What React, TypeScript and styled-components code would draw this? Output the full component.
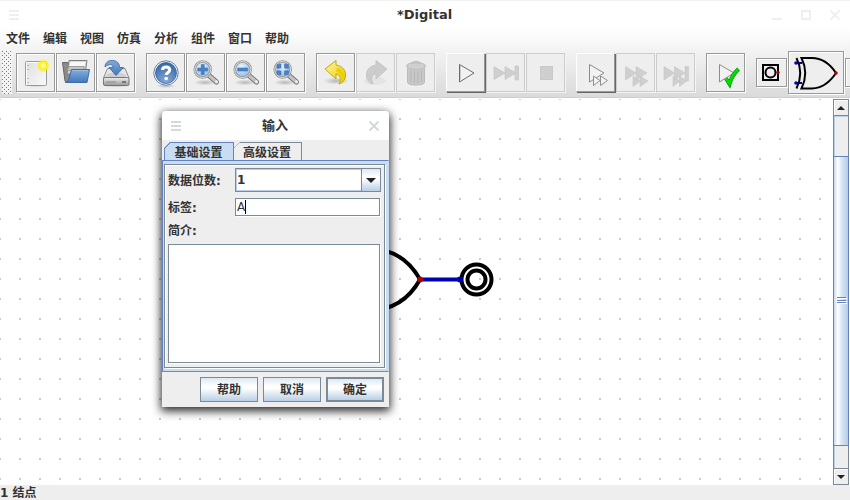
import React from 'react';
import styled, { createGlobalStyle, css } from 'styled-components';

const ink = '#333333';
const steel = '#7a8a99';
const blue = '#6382bf';
const panel = '#eeeeee';
const metal = 'linear-gradient(#dde8f3 0%, #ffffff 35%, #ffffff 45%, #b8cfe5 100%)';

const GlobalStyle = createGlobalStyle`
  * { box-sizing: border-box; }
  body { margin: 0; background: #ffffff; }
  body, button, input, select, textarea {
    font-family: "DejaVu Sans", "Noto Sans CJK SC", sans-serif;
    font-size: 12px;
    font-weight: 700;
    line-height: 16px;
    color: ${ink};
  }
`;

const Window = styled.div`
  position: relative;
  display: flex;
  flex-direction: column;
  height: 100vh;
  overflow: hidden;
`;

const TitleBar = styled.header`
  display: grid;
  grid-template-columns: 1fr auto 1fr;
  align-items: center;
  flex: none;
  height: 28px;
  padding: 0 10px 0 9px;
  border-top: 1px solid #f2f2f2;
  background: #ffffff;
`;

const WindowTitle = styled.h1`
  margin: 0;
  font-size: 13px;
  font-weight: 700;
  line-height: 20px;
`;

const WindowControls = styled.div`
  display: flex;
  justify-content: flex-end;
  gap: 19px;
`;

const GlyphButton = styled.button<{ $tone: string }>`
  display: block;
  width: 10px;
  height: 10px;
  padding: 0;
  border: 0;
  background: none;
  color: ${p => p.$tone};
  svg { display: block; overflow: visible; }
`;

const Chrome = styled.div`
  flex: none;
  background: linear-gradient(#ffffff 0%, #f3f3f3 32%, #dadada 100%);
  border-bottom: 1px solid #cccccc;
`;

const MenuBar = styled.nav`
  display: flex;
  gap: 13px;
  height: 21px;
  padding: 2px 6px;
`;

const MenuButton = styled.button`
  padding: 0;
  border: 0;
  background: none;
  white-space: nowrap;
`;

const ToolBar = styled.div`
  display: flex;
  align-items: center;
  gap: 11px;
  height: 48px;
  padding: 0 0 1px 2px;
  overflow: hidden;
`;

const Grip = styled.div`
  flex: none;
  width: 10px;
  height: 43px;
  margin-right: -7px;
  background-color: #f4f4f4;
  background-image: conic-gradient(from 270deg at 1px 1px, #777777 90deg, transparent 0),
    conic-gradient(from 270deg at 1px 1px, #777777 90deg, transparent 0);
  background-position: 0 0, 2px 2px;
  background-size: 4px 4px;
`;

const ToolGroup = styled.div`
  display: flex;
  align-items: center;
  gap: 1px;
  flex: none;
`;

const ToolButton = styled.button<{ $raised?: boolean; $w?: number; $h?: number }>`
  display: block;
  flex: none;
  width: ${p => p.$w ?? 39}px;
  height: ${p => p.$h ?? 39}px;
  padding: 0;
  border: 1px solid #999999;
  background: ${panel};
  box-shadow: inset 1px 1px #ffffff, 1px 1px #ffffff;
  svg { display: block; }
  &:disabled { border-color: #cccccc; box-shadow: 1px 1px #f4f4f4; }
  ${p => p.$raised && css`
    border-color: #ffffff #999999 #999999 #ffffff;
    box-shadow: 1px 1px #666666;
  `}
`;

const Workspace = styled.main`
  display: flex;
  flex: 1;
  min-height: 0;
  margin-top: 1px;
`;

const Canvas = styled.svg`
  display: block;
  flex: 1;
  min-width: 0;
  height: 100%;
`;

const ScrollBar = styled.div`
  display: flex;
  flex-direction: column;
  flex: none;
  width: 16px;
  margin-right: 1px;
  border: 1px solid ${steel};
  background: ${panel};
`;

const ScrollButton = styled.button`
  display: grid;
  place-items: center;
  flex: none;
  height: 15px;
  padding: 0;
  border: 0;
  background: ${panel};
  box-shadow: inset 1px 1px #ffffff;
`;

const ScrollTrack = styled.div`
  display: grid;
  grid-template-rows: 40fr 291fr 22fr;
  flex: 1;
  border: solid ${steel};
  border-width: 1px 0;
  box-shadow: inset 1px 1px #b8cfe5;
`;

const ScrollThumb = styled.div`
  display: grid;
  place-items: center;
  grid-row: 2;
  margin: 0 -1px;
  padding-left: 2px;
  border: 1px solid ${blue};
  background: linear-gradient(90deg, #c3d8ee 0%, #ffffff 25%, #f4f9ff 36%, #dce9f6 50%, #b4cce4 100%);
`;

const StatusBar = styled.footer`
  flex: none;
  height: 15px;
  line-height: 17px;
  background: ${panel};
`;

const Dialog = styled.section`
  position: absolute;
  left: 162px;
  top: 111px;
  width: 227px;
  border-radius: 4px 4px 0 0;
  background: ${panel};
  box-shadow: 0 3px 10px 1px rgba(0, 0, 0, 0.85);
`;

const DialogTitle = styled.div`
  display: grid;
  grid-template-columns: 1fr auto 1fr;
  align-items: center;
  justify-items: start;
  height: 29px;
  padding: 0 10px 0 9px;
  border-radius: 4px 4px 0 0;
  background: #ffffff;
  & > :last-child { justify-self: end; }
`;

const Tabs = styled.div`
  display: flex;
  height: 20px;
  padding: 2px 2px 0;
`;

const Tab = styled.button<{ $active?: boolean }>`
  width: ${p => (p.$active ? 70 : 68)}px;
  height: 18px;
  padding: 2px 1px 0 0;
  border: solid ${p => (p.$active ? blue : steel)};
  border-width: 1px 1px 0 ${p => (p.$active ? 1 : 0)}px;
  clip-path: polygon(6px 0, 100% 0, 100% 100%, 0 100%, 0 6px);
  background: linear-gradient(135deg, ${p => (p.$active ? blue : steel)} 4px, ${p => (p.$active ? '#c8ddf2' : panel)} 4px);
  line-height: 16px;
`;

const TabPanel = styled.div`
  padding: 3px;
  padding-left: 1px;
  border: 1px solid ${blue};
  border-right-color: #c8ddf2;
  border-bottom-color: ${steel};
  background: #c8ddf2;
`;

const Form = styled.form`
  display: grid;
  grid-template-columns: 67px minmax(0, 1fr);
  align-items: center;
  row-gap: 5px;
  padding: 3px 3px 4px 3px;
  border: 1px solid ${steel};
  background: ${panel};
  box-shadow: inset 1px 1px #ffffff, 1px 1px #ffffff;
`;

const Label = styled.label`
  padding-top: 1px;
  white-space: nowrap;
`;

const ComboBox = styled.div`
  position: relative;
  display: flex;
  height: 24px;
  border: 1px solid ${steel};
  background: #ffffff;
  box-shadow: inset 0 0 0 1px #b8cfe5;
`;

const Select = styled.select`
  flex: 1;
  padding: 0 1px;
  border: 0;
  outline: 0;
  appearance: none;
  background: transparent;
`;

const ComboArrow = styled.span`
  position: absolute;
  right: 0;
  top: 0;
  bottom: 0;
  display: grid;
  place-items: center;
  width: 19px;
  border-left: 1px solid ${steel};
  background: ${metal};
  pointer-events: none;
`;

const FieldBox = styled.div`
  position: relative;
  display: flex;
  margin: 1px 1px 1px 0;
`;

const TextInput = styled.input`
  flex: 1;
  min-width: 0;
  height: 18px;
  padding: 0 1px;
  border: 1px solid ${steel};
  outline: 0;
  background: #ffffff;
  box-shadow: 1px 1px #ffffff;
  font-weight: 400;
  caret-color: transparent;
`;

const Caret = styled.span`
  position: absolute;
  left: 10px;
  top: 2px;
  bottom: 2px;
  width: 1px;
  background: #000000;
`;

const TextArea = styled.textarea`
  grid-column: 1 / -1;
  display: block;
  height: 119px;
  margin-right: 1px;
  padding: 1px;
  border: 1px solid ${steel};
  outline: 0;
  resize: none;
  background: #ffffff;
  box-shadow: 1px 1px #ffffff;
  font-weight: 400;
`;

const DialogActions = styled.div`
  display: flex;
  justify-content: flex-end;
  gap: 5px;
  padding: 5px;
`;

const PushButton = styled.button<{ $primary?: boolean }>`
  width: 58px;
  height: 25px;
  padding: 1px 0 0;
  border: ${p => (p.$primary ? 2 : 1)}px solid ${steel};
  background: ${metal};
`;

const Hamburger = () => (
  <svg width="10" height="10"><path d="M0 1h10M0 5h10M0 9h10" stroke="currentColor" strokeWidth="2" /></svg>
);
const Cross = () => (
  <svg width="10" height="10"><path d="M.5 .5l9 9M9.5 .5l-9 9" stroke="currentColor" strokeWidth="2" /></svg>
);

const Icon = ({ children, w = 37, h = 37 }: { children: React.ReactNode; w?: number; h?: number }) => (
  <svg width={w} height={h} viewBox={`0 0 ${w} ${h}`} fill="none" aria-hidden="true">{children}</svg>
);

const HiddenSvg = styled.svg`
  position: absolute;
`;

const Gradients = () => (
  <HiddenSvg width="0" height="0" aria-hidden="true">
    <defs>
      <linearGradient id="paper" x1="0" y1="0" x2="1" y2="1"><stop stopColor="#dedede" /><stop offset="1" stopColor="#fafafa" /></linearGradient>
      <linearGradient id="azure" x1="0" y1="0" x2="0" y2="1"><stop stopColor="#82addc" /><stop offset="1" stopColor="#4179b8" /></linearGradient>
      <linearGradient id="grey" x1="0" y1="0" x2="0" y2="1"><stop stopColor="#f0f0f0" /><stop offset="1" stopColor="#969696" /></linearGradient>
      <linearGradient id="gold" x1="0" y1="0" x2="1" y2="1"><stop stopColor="#fff6a0" /><stop offset="1" stopColor="#e9c900" /></linearGradient>
      <radialGradient id="sun"><stop stopColor="#fffff0" /><stop offset=".35" stopColor="#fff64a" /><stop offset=".7" stopColor="#fff200" stopOpacity=".85" /><stop offset="1" stopColor="#fff200" stopOpacity="0" /></radialGradient>
      <radialGradient id="shade"><stop stopColor="#888" stopOpacity=".55" /><stop offset="1" stopColor="#888" stopOpacity="0" /></radialGradient>
      <radialGradient id="lens" cx=".4" cy=".3" r=".8"><stop stopColor="#e8f2fd" /><stop offset="1" stopColor="#8ab4e4" /></radialGradient>
      <radialGradient id="orb" cx=".5" cy=".9" r=".9"><stop stopColor="#86aad6" /><stop offset="1" stopColor="#3465a4" /></radialGradient>
    </defs>
  </HiddenSvg>
);

const NewIcon = () => (
  <Icon>
    <ellipse cx="19" cy="31.5" rx="12" ry="1.5" fill="url(#shade)" />
    <rect x="8.5" y="7.5" width="21" height="24" rx="1" fill="url(#paper)" stroke="#9a9a9a" />
    <path d="M9.5 31V8.500H28.500" stroke="#fff" />
    <path d="M11 11v1M11 15v1M11 24v1M11 28v1" stroke="#888" />
    <circle cx="26.300" cy="11.700" r="6.500" fill="url(#sun)" />
  </Icon>
);

const OpenIcon = () => (
  <Icon>
    <path d="M5.500 8.500h5l1 2h2v18H9L8 27z" fill="#8c8c8c" stroke="#666" />
    <path d="M12 6.500h18L28 20H10z" fill="#d8d8d8" stroke="#808080" />
    <path d="M13.500 8h15l-1 4h-15z" fill="#f8f8f8" />
    <path d="M10 16.500 12 12.500h15v4z" fill="#c4c4c4" stroke="#8c8c8c" strokeWidth=".7" />
    <path d="M14.500 15.500H32.500L30 28.500H8.500q3-1 3.500-4z" fill="url(#azure)" stroke="#3c6da8" />
    <path d="M15.500 16.500H31" stroke="#9bc0e8" />
  </Icon>
);

const SaveIcon = () => (
  <Icon>
    <ellipse cx="19" cy="31.500" rx="14" ry="2" fill="url(#shade)" />
    <path d="M10.500 14.500H28L32 24H6.500z" fill="#e6e6e6" stroke="#8b8b8b" />
    <ellipse cx="19" cy="22" rx="10" ry="3.500" fill="#cfcfcf" />
    <rect x="6.500" y="23.500" width="25.500" height="8" rx="1.500" fill="url(#grey)" stroke="#777" />
    <path d="M10 27v2M12 27v2M14 27v2M16 27v2M18 27v2" stroke="#888" />
    <path d="M25 28h4" stroke="#777" strokeWidth="2" />
    <path d="M8 13C8 7.500 13 6 16.500 6.500 21 7.500 22.500 10 22.500 13.500H26.500L19 21.500 12 13.500H16C16 10 12 9.500 8 13z" fill="url(#azure)" stroke="#36659d" strokeWidth=".8" />
  </Icon>
);

const HelpIcon = () => (
  <Icon>
    <ellipse cx="19" cy="32" rx="10" ry="2" fill="url(#shade)" />
    <circle cx="19" cy="19" r="12.200" fill="#fff" stroke="#6180a6" />
    <circle cx="19" cy="19" r="10.500" fill="url(#orb)" stroke="#32609c" strokeWidth=".8" />
    <path d="M15.500 16C15.500 13.500 17 13 19 13c2.200 0 3.700 1 3.700 3 0 2.400-3.500 2.500-3.500 5" stroke="#fff" strokeWidth="3" />
    <circle cx="19.200" cy="24.500" r="1.800" fill="#fff" />
  </Icon>
);

const Magnifier = ({ sign }: { sign: string }) => (
  <Icon>
    <ellipse cx="18" cy="28.500" rx="11" ry="3" fill="url(#shade)" />
    <path d="M22 21.500 29.500 28" stroke="#777" strokeWidth="5" strokeLinecap="round" />
    <path d="M22 21.500 29.500 28" stroke="#c4c4c4" strokeWidth="3" strokeLinecap="round" />
    <circle cx="29.500" cy="27.800" r="1.500" fill="#eee" />
    <circle cx="15.700" cy="15.500" r="8" fill="url(#lens)" stroke="#909090" strokeWidth="2.500" />
    <circle cx="15.700" cy="15.500" r="8" stroke="#e0e0e0" />
    <path d={sign} fill="#4c82c4" stroke="#3f74b5" strokeWidth=".6" />
  </Icon>
);

const undoPath = 'M8 15 19 6.500V11C26 12 29 17 28.500 22c-.3 4-3 7-6.500 8 2-4 2-9.500-3-10V25z';
const UndoIcon = () => (
  <Icon>
    <ellipse cx="19" cy="27" rx="13" ry="3.500" fill="url(#shade)" />
    <path d={undoPath} fill="url(#gold)" stroke="#c8a600" strokeLinejoin="round" />
    <path d="M19.500 15.500C24 16.500 26 20 25 25" stroke="#edd000" strokeWidth="4" />
  </Icon>
);
const RedoIcon = () => (
  <Icon>
    <g transform="matrix(-1 0 0 1 38 0)">
      <ellipse cx="20" cy="27" rx="11" ry="4" fill="#e4e4e4" />
      <path d={undoPath} fill="#cccccc" stroke="#c6c6c6" strokeLinejoin="round" />
    </g>
  </Icon>
);
const TrashIcon = () => (
  <Icon>
    <path d="M10.500 13V28q0 3 8.500 3t8.500-3V13z" fill="#c8c8c8" stroke="#bababa" />
    <path d="M14 16v12M17.500 17v12M21 17v12M24.500 16v12" stroke="#b5b5b5" />
    <ellipse cx="19" cy="12" rx="9.500" ry="3.500" fill="#cfcfcf" stroke="#bdbdbd" />
    <path d="M15 10V8.500q4-2.500 8 0V10" fill="#c6c6c6" stroke="#bababa" />
  </Icon>
);

const Triangle = () => <path d="M12.500 10.500V28L27 19z" fill="#f2f2f2" stroke="#8c8c8c" strokeLinejoin="round" />;
const PlayIcon = () => (
  <Icon><path d="M12.500 10.500V28L27 19z" fill="#f2f2f2" stroke="#6c6c6c" strokeLinejoin="round" /><path d="M13.500 12V26" stroke="#ccc" /></Icon>
);
const StepIcon = () => (
  <Icon><path d="M7 12.500v13L18 19zM18 12.500v13L29 19zM28 12h3.500v14H28z" fill="#cfcfcf" stroke="#c4c4c4" strokeWidth=".7" /></Icon>
);
const StopIcon = () => <Icon><rect x="13.500" y="12.500" width="12" height="13" fill="#cfcfcf" stroke="#c9c9c9" /></Icon>;
const RunBreakIcon = () => (
  <Icon><Triangle /><path d="M16.500 22v9.500l6.500-5zM23.500 22v9.500l7-5z" fill="#f2f2f2" stroke="#909090" strokeLinejoin="round" /></Icon>
);
const FastIcon = () => (
  <Icon><path d="M8.500 12.500v13.500L19 19zM19 12.500v13.500L30 19zM16 22v10.500l7.500-5.500zM23 22v10.500L31 27z" fill="#cfcfcf" stroke="#c6c6c6" strokeWidth=".6" /></Icon>
);
const FastEndIcon = () => (
  <Icon><path d="M7 12.500v13.500L17.500 19zM17.500 12.500v13.500L28 19zM28 12.500h3.500V27H28zM16 22v10.500l7-5.500zM22.500 22v10.500l7-5.500z" fill="#cfcfcf" stroke="#c6c6c6" strokeWidth=".6" /></Icon>
);
const CheckIcon = () => (
  <Icon><Triangle /><path d="M19 24.500 22.500 30Q25 21 31.500 15" stroke="#008c00" strokeWidth="4" /><path d="M19 24.500 22.500 29.500Q25 21 31.500 15" stroke="#00e000" strokeWidth="2.800" /></Icon>
);
const PinIcon = () => (
  <Icon w={28} h={27}>
    <rect x="6" y="6" width="15" height="15" stroke="#000" strokeWidth="2" />
    <circle cx="13.500" cy="13.500" r="5" stroke="#000" strokeWidth="2" />
    <circle cx="21" cy="13.500" r="1.700" fill="#b00000" />
  </Icon>
);
const XorIcon = () => (
  <Icon w={54} h={41}>
    <path d="M6 11h7M6 31h7" stroke="#0000b8" strokeWidth="2" />
    <circle cx="7" cy="11" r="1.800" fill="#0000d8" /><circle cx="7" cy="31" r="1.800" fill="#0000d8" />
    <path d="M7.500 6Q15 21 7.500 36.500M12.500 6Q20 21 12.500 36.500H23Q37 36 47 21 37 6 23 6z" stroke="#000" strokeWidth="2" />
    <circle cx="47" cy="21" r="1.800" fill="#c00000" />
  </Icon>
);

const menus = ['文件', '编辑', '视图', '仿真', '分析', '组件', '窗口', '帮助'];

type Tool = { name: string; icon: React.ReactNode; disabled?: boolean; raised?: boolean };
const toolGroups: Tool[][] = [
  [
    { name: '新建', icon: <NewIcon /> },
    { name: '打开', icon: <OpenIcon /> },
    { name: '保存', icon: <SaveIcon /> },
  ],
  [
    { name: '帮助', icon: <HelpIcon /> },
    { name: '放大', icon: <Magnifier sign="M14.200 10.500h3v3.500h3.500v3h-3.500v3.500h-3v-3.500h-3.500v-3h3.500z" /> },
    { name: '缩小', icon: <Magnifier sign="M10.700 14h10v3h-10z" /> },
    { name: '适应窗口', icon: <Magnifier sign="M10 10.500l4-.5v4l-4 .5zM21.500 10.500v4l-4-.5v-4zM10 16.500l4 .5v4l-4-.5zM21.500 16.500v4l-4 .5v-4z" /> },
  ],
  [
    { name: '撤销', icon: <UndoIcon /> },
    { name: '重做', icon: <RedoIcon />, disabled: true },
    { name: '删除', icon: <TrashIcon />, disabled: true },
  ],
  [
    { name: '启动仿真', icon: <PlayIcon />, raised: true },
    { name: '单步', icon: <StepIcon />, disabled: true },
    { name: '停止', icon: <StopIcon />, disabled: true },
  ],
  [
    { name: '运行至断点', icon: <RunBreakIcon />, raised: true },
    { name: '快速运行', icon: <FastIcon />, disabled: true },
    { name: '运行到底', icon: <FastEndIcon />, disabled: true },
  ],
  [{ name: '运行测试', icon: <CheckIcon /> }],
];

export default function App() {
  return (
    <Window>
      <GlobalStyle />
      <Gradients />
      <TitleBar>
        <GlyphButton $tone="#edf0f0" aria-label="窗口菜单"><Hamburger /></GlyphButton>
        <WindowTitle>*Digital</WindowTitle>
        <WindowControls>
          <GlyphButton $tone="#edf0f0" aria-label="最小化"><svg width="10" height="10"><path d="M0 9h10" stroke="currentColor" strokeWidth="2" /></svg></GlyphButton>
          <GlyphButton $tone="#edf0f0" aria-label="最大化"><svg width="10" height="10"><path d="M1 1h8v8H1z" fill="none" stroke="currentColor" strokeWidth="2" /></svg></GlyphButton>
          <GlyphButton $tone="#edf0f0" aria-label="关闭"><Cross /></GlyphButton>
        </WindowControls>
      </TitleBar>

      <Chrome>
        <MenuBar>{menus.map(m => <MenuButton key={m}>{m}</MenuButton>)}</MenuBar>
        <ToolBar role="toolbar">
          <Grip />
          {toolGroups.map((group, i) => (
            <ToolGroup key={i}>
              {group.map(t => (
                <ToolButton key={t.name} aria-label={t.name} disabled={t.disabled} $raised={t.raised}>{t.icon}</ToolButton>
              ))}
            </ToolGroup>
          ))}
          <ToolGroup>
            <ToolButton aria-label="输出" $w={31} $h={29}><PinIcon /></ToolButton>
            <ToolButton aria-label="异或门" $w={56} $h={43}><XorIcon /></ToolButton>
            <ToolButton aria-label="元件" $w={31} $h={29} />
          </ToolGroup>
        </ToolBar>
      </Chrome>

      <Workspace>
        <Canvas role="img" aria-label="电路图">
          <defs>
            <pattern id="grid" x="19" y="-1" width="20" height="20" patternUnits="userSpaceOnUse">
              <rect width="2" height="2" fill="#cccccc" />
            </pattern>
          </defs>
          <rect width="100%" height="100%" fill="#ffffff" />
          <rect width="100%" height="100%" fill="url(#grid)" />
          <g fill="none" stroke="#000000" strokeWidth="4">
            <path d="M340 150H370Q403 150 420 180.500 403 211 370 211H340" />
            <circle cx="476.500" cy="180.500" r="15" />
            <circle cx="476.500" cy="180.500" r="9" />
          </g>
          <path d="M420 180.500H460" stroke="#0000b2" strokeWidth="4" />
          <circle cx="420" cy="180.500" r="3" fill="#b20000" />
          <circle cx="460" cy="180.500" r="3" fill="#0000b2" />
        </Canvas>
        <ScrollBar>
          <ScrollButton aria-label="向上滚动"><svg width="8" height="4"><path d="M4 0l4 4H0z" fill="#222" /></svg></ScrollButton>
          <ScrollTrack>
            <ScrollThumb>
              <svg width="10" height="7"><path d="M1 1.500h9M1 4.500h9M1 6.500h9" stroke="#fff" /><path d="M0 .5h9M0 3.500h9M0 5.500h9" stroke={blue} /></svg>
            </ScrollThumb>
          </ScrollTrack>
          <ScrollButton aria-label="向下滚动"><svg width="8" height="4"><path d="M0 0h8L4 4z" fill="#222" /></svg></ScrollButton>
        </ScrollBar>
      </Workspace>
      <StatusBar>1 结点</StatusBar>

      <Dialog role="dialog" aria-labelledby="dialog-title">
        <DialogTitle>
          <GlyphButton $tone="#d3dadd" aria-label="对话框菜单"><Hamburger /></GlyphButton>
          <WindowTitle as="h2" id="dialog-title">输入</WindowTitle>
          <GlyphButton $tone="#d3dadd" aria-label="关闭对话框"><Cross /></GlyphButton>
        </DialogTitle>
        <Tabs role="tablist">
          <Tab role="tab" aria-selected="true" $active>基础设置</Tab>
          <Tab role="tab" aria-selected="false">高级设置</Tab>
        </Tabs>
        <TabPanel role="tabpanel">
          <Form id="settings" onSubmit={e => e.preventDefault()}>
            <Label htmlFor="bits">数据位数:</Label>
            <ComboBox>
              <Select id="bits" defaultValue="1"><option>1</option><option>2</option><option>4</option><option>8</option></Select>
              <ComboArrow><svg width="10" height="5"><path d="M0 0h10L5 5z" fill="#222" /></svg></ComboArrow>
            </ComboBox>
            <Label htmlFor="label">标签:</Label>
            <FieldBox><TextInput id="label" defaultValue="A" /><Caret /></FieldBox>
            <Label htmlFor="description">简介:</Label>
            <TextArea id="description" />
          </Form>
        </TabPanel>
        <DialogActions>
          <PushButton type="button">帮助</PushButton>
          <PushButton type="button">取消</PushButton>
          <PushButton type="submit" form="settings" $primary>确定</PushButton>
        </DialogActions>
      </Dialog>
    </Window>
  );
}
